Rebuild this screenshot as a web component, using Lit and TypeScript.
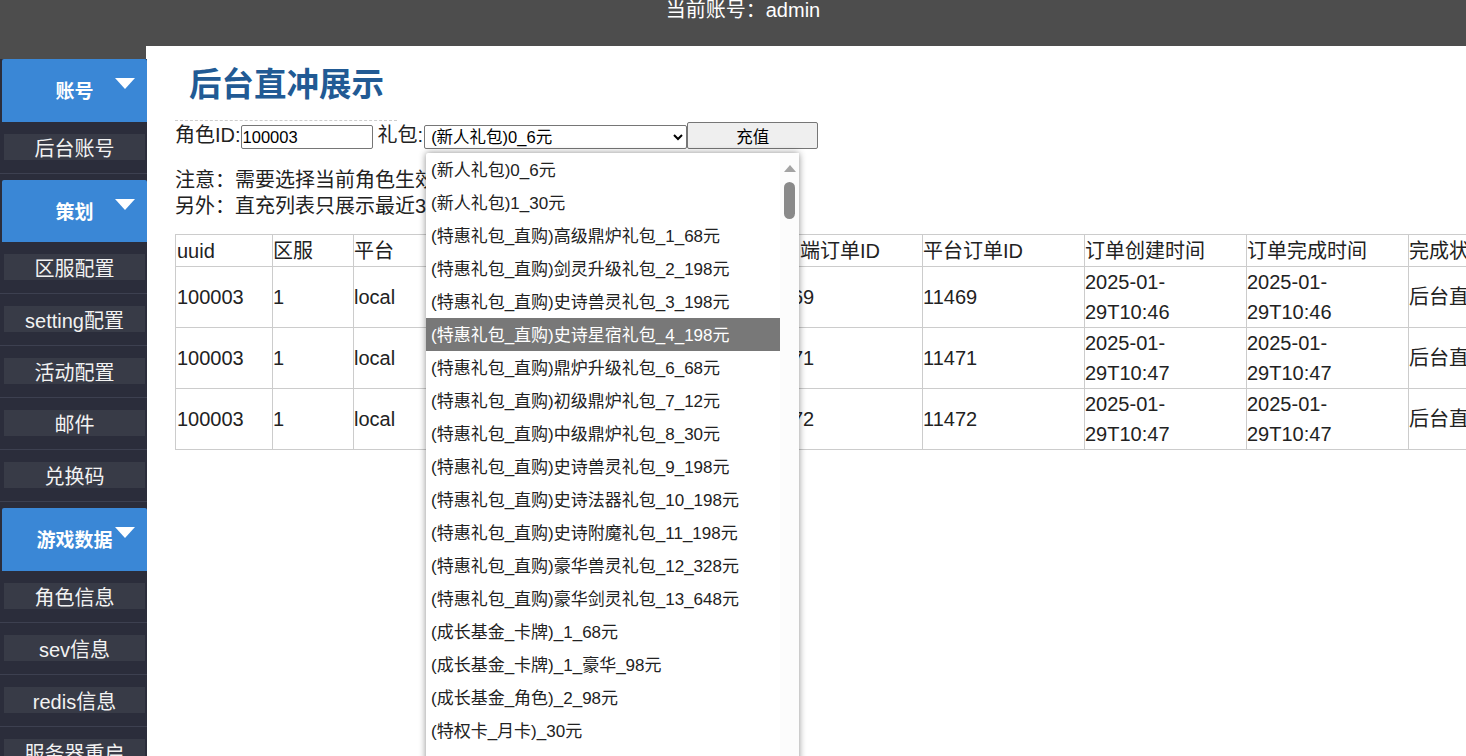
import { LitElement, css, html } from 'lit';
import { customElement } from 'lit/decorators.js';

const MENU = [
  { title: '账号', items: ['后台账号'] },
  { title: '策划', items: ['区服配置', 'setting配置', '活动配置', '邮件', '兑换码'] },
  { title: '游戏数据', items: ['角色信息', 'sev信息', 'redis信息', '服务器重启'] },
];

const OPTIONS = [
  '(新人礼包)0_6元',
  '(新人礼包)1_30元',
  '(特惠礼包_直购)高级鼎炉礼包_1_68元',
  '(特惠礼包_直购)剑灵升级礼包_2_198元',
  '(特惠礼包_直购)史诗兽灵礼包_3_198元',
  '(特惠礼包_直购)史诗星宿礼包_4_198元',
  '(特惠礼包_直购)鼎炉升级礼包_6_68元',
  '(特惠礼包_直购)初级鼎炉礼包_7_12元',
  '(特惠礼包_直购)中级鼎炉礼包_8_30元',
  '(特惠礼包_直购)史诗兽灵礼包_9_198元',
  '(特惠礼包_直购)史诗法器礼包_10_198元',
  '(特惠礼包_直购)史诗附魔礼包_11_198元',
  '(特惠礼包_直购)豪华兽灵礼包_12_328元',
  '(特惠礼包_直购)豪华剑灵礼包_13_648元',
  '(成长基金_卡牌)_1_68元',
  '(成长基金_卡牌)_1_豪华_98元',
  '(成长基金_角色)_2_98元',
  '(特权卡_月卡)_30元',
];

const COLS = [97, 81, 81, 163, 162, 163, 162, 162, 162, 162];
const HEAD = ['uuid', '区服', '平台', '礼包', '礼包ID', '客户端订单ID', '平台订单ID', '订单创建时间', '订单完成时间', '完成状态'];
const ROWS = [
  ['100003', '1', 'local', '', '', '11469', '11469', '2025-01-29T10:46', '2025-01-29T10:46', '后台直充'],
  ['100003', '1', 'local', '', '', '11471', '11471', '2025-01-29T10:47', '2025-01-29T10:47', '后台直充'],
  ['100003', '1', 'local', '', '', '11472', '11472', '2025-01-29T10:47', '2025-01-29T10:47', '后台直充'],
];

@customElement('app-root')
export class AppRoot extends LitElement {
  static styles = css`
    :host {
      display: block;
      height: 756px;
      overflow: hidden;
      font-family: "Liberation Sans", "Noto Sans CJK SC", sans-serif;
      font-size: 20px;
      color: #222;
      background: #4d4d4d;
    }
    .top {
      height: 46px;
      padding-left: 20px;
      box-sizing: border-box;
      background: #4d4d4d;
      color: #fff;
      text-align: center;
      line-height: 20px;
    }
    .body {
      display: flex;
      height: 710px;
    }
    .side {
      position: relative;
      z-index: 1;
      flex: none;
      width: 147px;
      margin-right: -1px;
      padding-top: 13px;
      box-sizing: border-box;
      background: linear-gradient(transparent 13px, #2b2d3b 13px);
    }
    .group {
      margin-bottom: 6px;
    }
    .head {
      position: relative;
      height: 62.5px;
      margin-left: 2px;
      box-sizing: border-box;
      padding-top: 18px;
      background: #3a87d6;
      border-radius: 2px 2px 0 0;
      color: #fff;
      font-size: 19px;
      font-weight: bold;
      line-height: 29px;
      text-align: center;
    }
    .arrow {
      position: absolute;
      left: 113px;
      top: 19px;
      width: 0;
      height: 0;
      border-left: 10px solid transparent;
      border-right: 10px solid transparent;
      border-top: 11px solid #fff;
    }
    .item {
      height: 52px;
      box-sizing: border-box;
      padding: 12px 2px 13px 4px;
      border-bottom: 1px solid #3d4050;
    }
    .item div {
      height: 26px;
      background: #383b47;
      color: #f2f2f2;
      line-height: 30px;
      text-align: center;
      white-space: nowrap;
    }
    .main {
      position: relative;
      flex: 1;
      min-width: 0;
      background: #fff;
      padding-left: 29px;
      overflow: hidden;
    }
    h1 {
      width: 222px;
      height: 75px;
      margin: 0;
      box-sizing: border-box;
      padding: 20px 0 0 14px;
      border-bottom: 1px dashed #ccc;
      color: #215a94;
      font-size: 32.5px;
      line-height: 38px;
      font-weight: bold;
      white-space: nowrap;
    }
    .form {
      display: flex;
      align-items: flex-end;
      height: 28px;
      white-space: nowrap;
      line-height: 28px;
    }
    input {
      width: 132px;
      height: 24px;
      margin: 0 5px 0 0;
      padding: 1px;
      box-sizing: border-box;
      border: 1px solid #767676;
      border-radius: 2px;
      font: 16.5px "Liberation Sans", "Noto Sans CJK SC", sans-serif;
      color: #000;
    }
    select {
      width: 263px;
      height: 24px;
      margin: 0 0 0 1px;
      padding-left: 2px;
      box-sizing: border-box;
      font: 16.5px "Liberation Sans", "Noto Sans CJK SC", sans-serif;
      color: #000;
      background: #fff;
      border: 1px solid #767676;
      border-radius: 2px;
    }
    button {
      width: 131px;
      height: 27px;
      margin: 0;
      padding: 0;
      box-sizing: border-box;
      font: 16.5px "Liberation Sans", "Noto Sans CJK SC", sans-serif;
      color: #000;
      background: #efefef;
      border: 1px solid #767676;
      border-radius: 2px;
    }
    .note {
      margin-top: 18px;
      line-height: 26px;
      white-space: nowrap;
    }
    table {
      margin-top: 15px;
      table-layout: fixed;
      width: 1395px;
      border-collapse: collapse;
      line-height: 30px;
    }
    th, td {
      padding: 0;
      border: 1px solid #ccc;
      font-weight: normal;
      text-align: left;
      vertical-align: middle;
    }
    th:first-child, td:first-child {
      padding-left: 1px;
    }
    th {
      height: 31px;
      white-space: nowrap;
      overflow: hidden;
    }
    .drop {
      position: absolute;
      left: 280px;
      top: 107px;
      display: flex;
      width: 373px;
      height: 640px;
      background: #fff;
      box-shadow: 0 0 7px rgba(0, 0, 0, 0.45);
      border-radius: 2px;
      font-size: 17px;
      color: #222;
    }
    .list {
      flex: 1;
      min-width: 0;
    }
    .opt {
      height: 33px;
      padding-left: 5px;
      line-height: 35px;
      white-space: nowrap;
    }
    .opt.on {
      background: #787878;
      color: #fff;
    }
    .bar {
      flex: none;
      width: 19px;
      display: flex;
      flex-direction: column;
      align-items: center;
      background: #fcfcfc;
    }
    .up {
      margin-top: 12px;
      width: 0;
      height: 0;
      border-left: 6px solid transparent;
      border-right: 6px solid transparent;
      border-bottom: 7px solid #a3a3a3;
    }
    .thumb {
      margin-top: 10px;
      width: 11px;
      height: 37px;
      border-radius: 6px;
      background: #8a8a8a;
    }
  `;

  render() {
    return html`
      <div class="top">当前账号：admin</div>
      <div class="body">
        <div class="side">
          ${MENU.map(g => html`
            <div class="group">
              <div class="head">${g.title}<i class="arrow"></i></div>
              ${g.items.map(t => html`<div class="item"><div>${t}</div></div>`)}
            </div>
          `)}
        </div>
        <div class="main">
          <h1>后台直冲展示</h1>
          <div class="form">
            角色ID:<input value="100003" />礼包:<select>
              ${OPTIONS.map(o => html`<option>${o}</option>`)}
            </select><button>充值</button>
          </div>
          <div class="note">
            注意：需要选择当前角色生效<br />
            另外：直充列表只展示最近30条
          </div>
          <table>
            <colgroup>${COLS.map(w => html`<col style="width:${w}px" />`)}</colgroup>
            <tr>${HEAD.map(h => html`<th>${h}</th>`)}</tr>
            ${ROWS.map(r => html`<tr>${r.map(c => html`<td>${c}</td>`)}</tr>`)}
          </table>
          <div class="drop">
            <div class="list">
              ${OPTIONS.map((o, i) => html`<div class="opt ${i === 5 ? 'on' : ''}">${o}</div>`)}
            </div>
            <div class="bar"><i class="up"></i><i class="thumb"></i></div>
          </div>
        </div>
      </div>
    `;
  }
}
